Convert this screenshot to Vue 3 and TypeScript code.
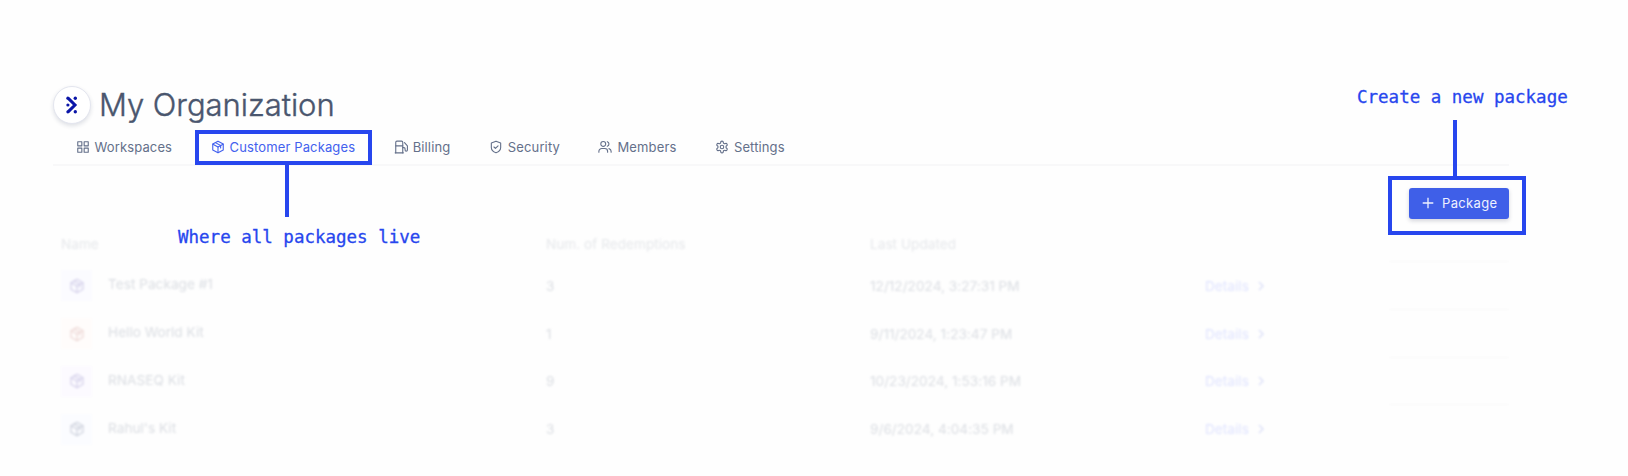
<script setup lang="ts">
type IconName = 'grid' | 'package' | 'fuel' | 'shield' | 'users' | 'settings'

interface Tab {
  label: string
  icon: IconName
  active?: boolean
}

interface PackageRow {
  name: string
  redemptions: number
  updated: string
  tone: string
}

/** Stroke paths on a 24 x 24 grid */
const icons: Record<IconName, string[]> = {
  grid: ['M3 3h7v7H3z', 'M14 3h7v7h-7z', 'M14 14h7v7h-7z', 'M3 14h7v7H3z'],
  package: [
    'M12 2l9 5v10l-9 5-9-5V7z',
    'M3.300 7.200L12 12l8.700-4.800',
    'M12 12v9.500',
    'M7.500 4.500l9 5v4',
  ],
  fuel: [
    'M2 22h14',
    'M3 22V4a2 2 0 0 1 2-2h8a2 2 0 0 1 2 2v18',
    'M3 10h12',
    'M15 13h2a2 2 0 0 1 2 2v2a2 2 0 0 0 4 0V10L18 4.500',
  ],
  shield: [
    'M20 13c0 5-3.500 7.500-8 9-4.500-1.500-8-4-8-9V5l8-3 8 3z',
    'M8.500 12l2.500 2.500 4.500-4.500',
  ],
  users: [
    'M9 11a4.200 4.200 0 1 0 0-8.400A4.200 4.200 0 0 0 9 11z',
    'M1.500 21v-1.500a5 5 0 0 1 5-5h5a5 5 0 0 1 5 5V21',
    'M16 2.900a4.200 4.200 0 0 1 0 7.900',
    'M22.500 21v-1.500a5 5 0 0 0-3.700-4.700',
  ],
  settings: [
    'M12.220 2h-.44a2 2 0 0 0-2 2v.18a2 2 0 0 1-1 1.730l-.43.25a2 2 0 0 1-2 0l-.15-.08a2 2 0 0 0-2.730.73l-.22.38a2 2 0 0 0 .73 2.730l.15.1a2 2 0 0 1 1 1.720v.51a2 2 0 0 1-1 1.740l-.15.09a2 2 0 0 0-.73 2.730l.22.38a2 2 0 0 0 2.730.73l.15-.08a2 2 0 0 1 2 0l.43.25a2 2 0 0 1 1 1.730V20a2 2 0 0 0 2 2h.44a2 2 0 0 0 2-2v-.18a2 2 0 0 1 1-1.730l.43-.25a2 2 0 0 1 2 0l.15.08a2 2 0 0 0 2.730-.73l.22-.39a2 2 0 0 0-.73-2.730l-.15-.08a2 2 0 0 1-1-1.740v-.5a2 2 0 0 1 1-1.740l.15-.09a2 2 0 0 0 .73-2.730l-.22-.38a2 2 0 0 0-2.730-.73l-.15.08a2 2 0 0 1-2 0l-.43-.25a2 2 0 0 1-1-1.730V4a2 2 0 0 0-2-2z',
    'M12 15a3 3 0 1 0 0-6 3 3 0 0 0 0 6z',
  ],
}

const tabs: Tab[] = [
  { label: 'Workspaces', icon: 'grid' },
  { label: 'Customer Packages', icon: 'package', active: true },
  { label: 'Billing', icon: 'fuel' },
  { label: 'Security', icon: 'shield' },
  { label: 'Members', icon: 'users' },
  { label: 'Settings', icon: 'settings' },
]

const rows: PackageRow[] = [
  { name: 'Test Package #1', redemptions: 3, updated: '12/12/2024, 3:27:31 PM', tone: 'indigo' },
  { name: 'Hello World Kit', redemptions: 1, updated: '9/11/2024, 1:23:47 PM', tone: 'orange' },
  { name: 'RNASEQ Kit', redemptions: 9, updated: '10/23/2024, 1:53:16 PM', tone: 'violet' },
  { name: "Rahul's Kit", redemptions: 3, updated: '9/6/2024, 4:04:35 PM', tone: 'slate' },
]
</script>

<template>
  <main class="page">
    <header class="org">
      <span class="org-logo">
        <svg viewBox="0 0 12 18" width="12" height="18">
          <path d="M2.300 2.400L9 9l-6.700 6.600" />
          <circle cx="1.900" cy="2.200" r="1.600" />
          <circle cx="1.900" cy="9" r="1.600" />
          <circle cx="1.900" cy="15.800" r="1.600" />
          <circle cx="9.300" cy="2.300" r="1.700" />
          <circle cx="9.300" cy="15.700" r="1.700" />
        </svg>
      </span>
      <h1>My Organization</h1>
    </header>

    <nav class="tabs">
      <a v-for="tab in tabs" :key="tab.label" class="tab" :class="{ 'tab--active': tab.active }">
        <svg class="icon" viewBox="0 0 24 24">
          <path v-for="d in icons[tab.icon]" :key="d" :d="d" />
        </svg>
        <span>{{ tab.label }}</span>
      </a>
    </nav>

    <div class="toolbar">
      <button class="new-package">
        <svg viewBox="0 0 12 12" width="12" height="12"><path d="M6 .7v10.600M.7 6h10.600" /></svg>
        <span>Package</span>
      </button>
    </div>

    <section class="table">
      <div class="row row--head">
        <span>Name</span>
        <span>Num. of Redemptions</span>
        <span>Last Updated</span>
      </div>
      <div v-for="row in rows" :key="row.name" class="row">
        <div class="name">
          <span class="tile" :class="`tile--${row.tone}`">
            <svg class="icon" viewBox="0 0 24 24">
              <path v-for="d in icons.package" :key="d" :d="d" />
            </svg>
          </span>
          <span class="name-text">{{ row.name }}</span>
        </div>
        <span>{{ row.redemptions }}</span>
        <span>{{ row.updated }}</span>
        <a class="details">
          <span>Details</span>
          <svg viewBox="0 0 8 10" width="8" height="10"><path d="M2 1l4 4-4 4" /></svg>
        </a>
        <span class="rule" />
      </div>
    </section>

    <!-- Callouts drawn over the page -->
    <div class="frame frame--tab" />
    <div class="stem stem--tab" />
    <p class="note note--tab">Where all packages live</p>

    <div class="frame frame--button" />
    <div class="stem stem--button" />
    <p class="note note--button">Create a new package</p>
  </main>
</template>

<style>
body {
  margin: 0;
  background: #fefefe;
}
</style>

<style scoped>
.page {
  position: relative;
  box-sizing: border-box;
  width: 1628px;
  height: 476px;
  padding: 86px 119px 0 53px;
  overflow: hidden;
  background: #fefefe;
  font-family: Inter, 'Liberation Sans', sans-serif;
  font-size: 13px;
  letter-spacing: 0.13px;
  color: #64708a;
}

svg {
  display: block;
  flex: none;
  overflow: visible;
}

.icon {
  width: 14px;
  height: 14px;
  fill: none;
  stroke: currentColor;
  stroke-width: 1.9;
  stroke-linecap: round;
  stroke-linejoin: round;
}

.org {
  display: flex;
  align-items: center;
  gap: 8px;
  height: 38px;
}

.org-logo {
  display: flex;
  align-items: center;
  justify-content: center;
  box-sizing: border-box;
  width: 38px;
  height: 38px;
  border: 1px solid #e4e6ef;
  border-radius: 50%;
  background: #fff;
  box-shadow: 0 2px 4px rgba(30, 40, 80, 0.14);
}

.org-logo svg {
  fill: #0b16a8;
}

.org-logo path {
  fill: none;
  stroke: #0b16a8;
  stroke-width: 3;
}

h1 {
  margin: 0;
  font-size: 31px;
  font-weight: 300;
  line-height: 38px;
  letter-spacing: -0.04px;
  white-space: nowrap;
  color: #4a566e;
  -webkit-text-stroke: 0.4px #4a566e;
}

.tabs {
  display: flex;
  gap: 38.5px;
  box-sizing: border-box;
  height: 42px;
  padding: 6px 0 0 22.5px;
  border-bottom: 2px solid #f8f8f9;
}

.tab {
  display: flex;
  align-items: center;
  gap: 5px;
  height: 34px;
  white-space: nowrap;
}

.tab--active {
  color: #4361ee;
}

.toolbar {
  display: flex;
  justify-content: flex-end;
  padding-top: 22px;
}

.new-package {
  display: flex;
  align-items: center;
  gap: 8px;
  width: 100px;
  height: 31px;
  padding: 0 0 1px 13px;
  border: 0;
  border-radius: 3px;
  background: #3f5fe8;
  box-shadow: 0 2px 4px rgba(20, 30, 60, 0.18);
  font: inherit;
  letter-spacing: 0.35px;
  color: #eef1ff;
}

.new-package path {
  fill: none;
  stroke: currentColor;
  stroke-width: 1.3;
}

.table {
  padding-top: 6px;
  filter: blur(0.8px);
  font-size: 13.6px;
  letter-spacing: 0.03px;
  color: #dbdee3;
}

.row {
  display: grid;
  grid-template-columns: 485px 324px 335px 1fr;
  align-items: center;
  position: relative;
  height: 47.8px;
  padding-left: 8px;
}

.row--head {
  height: 37px;
  color: #e6e8eb;
}

.name {
  display: flex;
  align-items: center;
  gap: 16px;
}

.name-text {
  padding-bottom: 3px;
}

.tile {
  display: flex;
  align-items: center;
  justify-content: center;
  width: 31px;
  height: 31px;
}

.tile .icon {
  width: 16px;
  height: 16px;
  stroke-width: 1.8;
}

.tile--indigo {
  background: #fbfbff;
  color: #d4d0ea;
}

.tile--orange {
  background: #fffcfb;
  color: #edd8d6;
}

.tile--violet {
  background: #fcfaff;
  color: #d4d0ea;
}

.tile--slate {
  background: #fbfcff;
  color: #cdd1dc;
}

.details {
  display: flex;
  align-items: center;
  gap: 8.5px;
  color: #e0e4ff;
}

.details path {
  fill: none;
  stroke: #dce0f8;
  stroke-width: 1.4;
}

.rule {
  position: absolute;
  top: -1px;
  right: 0;
  width: 120px;
  height: 1px;
  background: #f8f8f9;
}

.frame {
  position: absolute;
  box-sizing: border-box;
  border: 4px solid #2746ee;
}

.frame--tab {
  left: 195px;
  top: 130px;
  width: 177px;
  height: 35px;
}

.frame--button {
  left: 1388px;
  top: 176px;
  width: 138px;
  height: 59px;
}

.stem {
  position: absolute;
  width: 4px;
  background: #2746ee;
}

.stem--tab {
  left: 285px;
  top: 164px;
  height: 53px;
}

.stem--button {
  left: 1453px;
  top: 120px;
  height: 58px;
}

.note {
  position: absolute;
  margin: 0;
  font-family: 'DejaVu Sans Mono', monospace;
  font-size: 17.500px;
  line-height: 24px;
  letter-spacing: 0;
  white-space: pre;
  color: #2746ee;
  -webkit-text-stroke: 0.3px #2746ee;
}

.note--tab {
  left: 178px;
  top: 225px;
}

.note--button {
  left: 1357px;
  top: 85px;
}
</style>
